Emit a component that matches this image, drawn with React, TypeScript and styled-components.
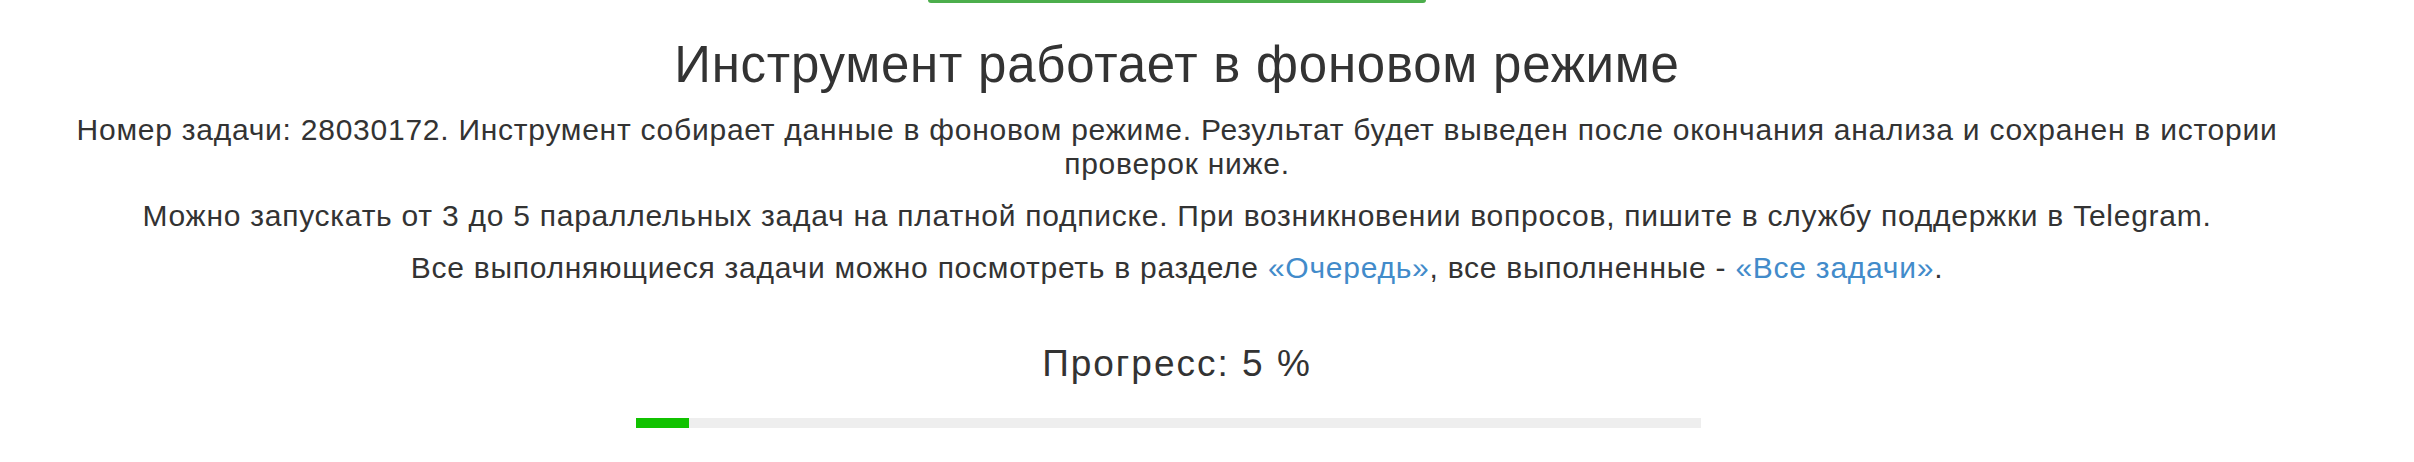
import React from "react";
import styled, { createGlobalStyle } from "styled-components";

const GlobalStyle = createGlobalStyle`
  body {
    margin: 0;
    background: #fff;
    color: #333;
    font-family: "Liberation Sans", Arial, sans-serif;
  }
`;

const Page = styled.div`
  width: 2354px;
  padding: 0 15px;
  box-sizing: border-box;
  text-align: center;
`;

const ButtonEdge = styled.div`
  width: 498px;
  height: 3px;
  margin: 0 auto;
  background: #4cae4c;
  border-radius: 0 0 4px 4px;
`;

const Title = styled.h1`
  margin: 34px 0 20px;
  font-size: 51px;
  font-weight: 400;
  line-height: 56px;
  letter-spacing: 0.75px;
  color: #333;
`;

const Text = styled.p`
  margin: 0 0 18px;
  font-size: 30px;
  line-height: 34px;
  letter-spacing: 0.75px;
`;

const Link = styled.a`
  color: #428bca;
  text-decoration: none;
`;

const ProgressLabel = styled.div`
  margin-top: 58px;
  font-size: 37px;
  line-height: 41px;
  letter-spacing: 2px;
`;

const TrackRow = styled.div`
  display: flex;
  justify-content: center;
  padding-right: 17px;
  margin-top: 34px;
`;

const Track = styled.div`
  width: 1065px;
  height: 10px;
  background: #eee;
`;

const Fill = styled.div`
  height: 100%;
  background: #11c200;
`;

const progress = 5;

export default function App() {
  return (
    <>
      <GlobalStyle />
      <Page>
        <ButtonEdge />
        <Title>Инструмент работает в фоновом режиме</Title>
        <Text>
          Номер задачи: 28030172. Инструмент собирает данные в фоновом режиме.
          Результат будет выведен после окончания анализа и сохранен в истории
          проверок ниже.
        </Text>
        <Text>
          Можно запускать от 3 до 5 параллельных задач на платной подписке. При
          возникновении вопросов, пишите в службу поддержки в Telegram.
        </Text>
        <Text>
          Все выполняющиеся задачи можно посмотреть в разделе{" "}
          <Link href="#">«Очередь»</Link>, все выполненные -{" "}
          <Link href="#">«Все задачи»</Link>.
        </Text>
        <ProgressLabel>Прогресс: {progress} %</ProgressLabel>
        <TrackRow>
          <Track>
            <Fill style={{ width: `${progress}%` }} />
          </Track>
        </TrackRow>
      </Page>
    </>
  );
}
